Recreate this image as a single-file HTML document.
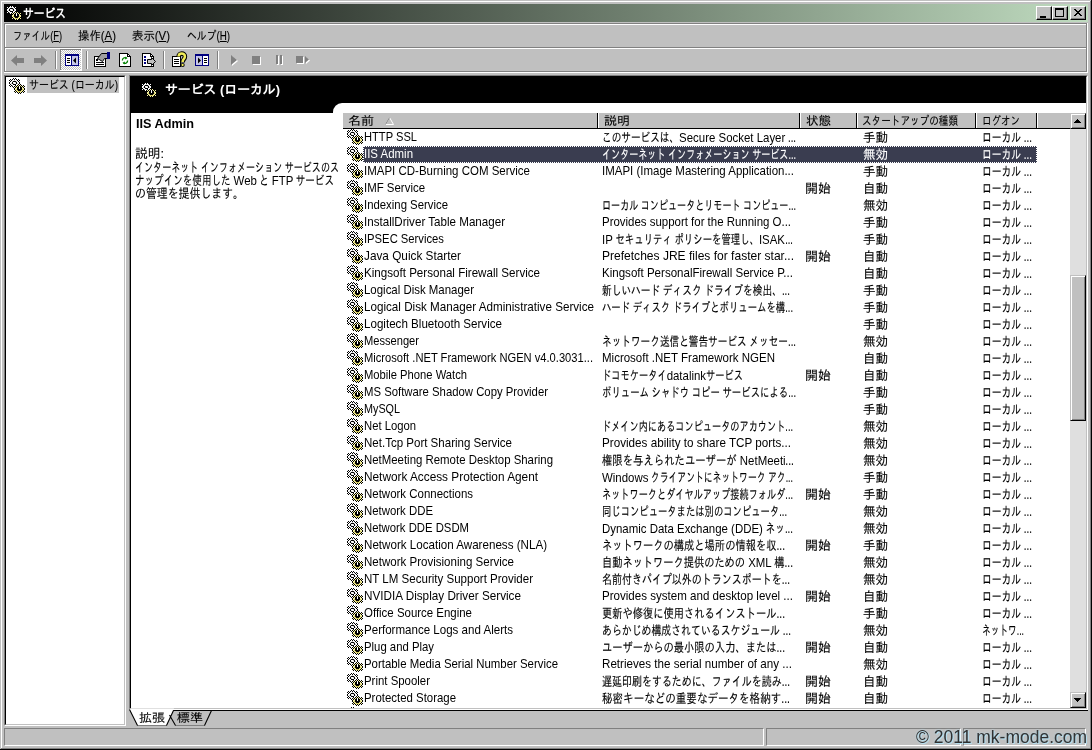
<!DOCTYPE html>
<html lang="ja">
<head>
<meta charset="utf-8">
<title>サービス</title>
<style>
html,body{margin:0;padding:0;}
body{width:1092px;height:750px;overflow:hidden;background:#c0c0c0;position:relative;
 font-family:"Liberation Sans","IPAGothic",sans-serif;font-size:12px;line-height:14px;color:#000;}
.abs,#win *{position:absolute;}
#win{position:absolute;left:0;top:0;width:1092px;height:750px;overflow:hidden;background:transparent;will-change:transform;}
#win *{box-sizing:border-box;white-space:nowrap;}
/* outer frame */
#fr-l{left:1px;top:1px;width:1px;height:748px;background:#fff;}
#fr-t{left:1px;top:1px;width:1090px;height:1px;background:#fff;}
#fr-r1{left:1090px;top:1px;width:1px;height:749px;background:#808080;}
#fr-r2{left:1091px;top:0;width:1px;height:750px;background:#000;}
#fr-b1{left:1px;top:748px;width:1090px;height:1px;background:#808080;}
#fr-b2{left:0;top:749px;width:1092px;height:1px;background:#000;}
/* title */
#title{left:4px;top:4px;width:1084px;height:18px;background:linear-gradient(to right,#000 0%,#c0dcc0 100%);}
#title .txt{left:19px;top:2px;color:#fff;font-weight:bold;font-size:13px;line-height:15px;}
.cbtn{top:2px;width:16px;height:14px;background:#c0c0c0;border:1px solid;border-color:#fff #000 #000 #fff;box-shadow:inset -1px -1px 0 #808080;}
/* menu */
#menu{left:4px;top:23px;width:1084px;height:24px;}
#menu span{top:6px;font-size:12px;line-height:14px;}
#menu u{position:static;}
.hl-d{background:#808080;height:1px;}
.hl-w{background:#fff;height:1px;}
/* toolbar */
#tb{left:4px;top:49px;width:1084px;height:23px;}
.sep{top:2px;width:2px;height:19px;border-left:1px solid #808080;border-right:1px solid #fff;}
/* panes */
#tree{left:4px;top:75px;width:122px;height:651px;background:#fff;border:1px solid;border-color:#808080 #fff #fff #808080;}
#tree .in{left:0;top:0;right:0;bottom:0;border:1px solid;border-color:#000 #c0c0c0 #c0c0c0 #000;}
#tree .selbg{left:22px;top:1px;width:92px;height:16px;background:#c0c0c0;}
#tree .txt{left:24px;top:2px;}
#right{left:129px;top:75px;width:959px;height:635px;background:#fff;border:1px solid;border-color:#808080 #fff #fff #808080;}
#right .in{left:0;top:0;right:0;bottom:0;border:1px solid;border-color:#000 #c0c0c0 #c0c0c0 #000;}
#band{left:131px;top:77px;width:955px;height:36px;background:#000;}
#bandcut{left:333px;top:103px;width:753px;height:12px;background:#fff;border-top-left-radius:9px;}
#band .txt,#bandtxt{color:#fff;font-weight:bold;font-size:13px;}
#hdr{left:343px;top:113px;width:727px;height:16px;background:#c0c0c0;border-bottom:1px solid #000;}
.hc{top:0;height:15px;border-right:1px solid #000;box-shadow:1px 0 0 #fff;}
.hc span{left:5px;top:1px;line-height:14px;}
.row{left:345px;width:692px;height:17px;}
.row .g{left:2px;top:0;}
.g{width:1px;height:1px;background:transparent;box-shadow:4px 0px #000,6px 0px #000,1px 1px #000,3px 1px #000,4px 1px #fff,5px 1px #000,6px 1px #fff,7px 1px #000,9px 1px #000,0px 2px #000,1px 2px #fff,2px 2px #000,3px 2px #fff,4px 2px #fff,5px 2px #c0c0c0,6px 2px #fff,7px 2px #fff,8px 2px #000,9px 2px #fff,10px 2px #000,1px 3px #000,2px 3px #fff,3px 3px #c0c0c0,4px 3px #000,5px 3px #000,6px 3px #000,7px 3px #c0c0c0,8px 3px #fff,9px 3px #000,0px 4px #000,1px 4px #fff,2px 4px #fff,3px 4px #000,4px 4px #fff,5px 4px #fff,6px 4px #c0c0c0,7px 4px #000,8px 4px #fff,9px 4px #fff,10px 4px #000,0px 5px #000,1px 5px #fff,2px 5px #c0c0c0,3px 5px #000,4px 5px #c0c0c0,5px 5px #fff,6px 5px #fff,7px 5px #000,8px 5px #c0c0c0,9px 5px #fff,10px 5px #000,1px 6px #000,2px 6px #fff,3px 6px #fff,4px 6px #000,5px 6px #000,6px 6px #000,7px 6px #fff,8px 6px #fff,9px 6px #000,11px 6px #000,0px 7px #000,1px 7px #fff,2px 7px #000,3px 7px #c0c0c0,4px 7px #fff,5px 7px #fff,6px 7px #000,7px 7px #fff,8px 7px #000,9px 7px #f4f0a0,10px 7px #000,11px 7px #f4f0a0,12px 7px #000,14px 7px #000,1px 8px #000,3px 8px #000,4px 8px #fff,5px 8px #000,6px 8px #f4f0a0,7px 8px #000,8px 8px #f4f0a0,9px 8px #000,10px 8px #fff,11px 8px #000,12px 8px #f4f0a0,13px 8px #000,14px 8px #f4f0a0,15px 8px #000,4px 9px #000,6px 9px #000,7px 9px #f4f0a0,8px 9px #000,9px 9px #000,10px 9px #fff,11px 9px #000,12px 9px #000,13px 9px #f4f0a0,14px 9px #000,5px 10px #000,6px 10px #f4f0a0,7px 10px #f4f0a0,8px 10px #000,9px 10px #000,10px 10px #fff,11px 10px #000,12px 10px #000,13px 10px #f4f0a0,14px 10px #f4f0a0,15px 10px #000,5px 11px #000,6px 11px #f4f0a0,7px 11px #d0c860,8px 11px #000,9px 11px #000,10px 11px #000,11px 11px #000,12px 11px #000,13px 11px #d0c860,14px 11px #f4f0a0,15px 11px #000,6px 12px #000,7px 12px #f4f0a0,8px 12px #d0c860,9px 12px #000,10px 12px #000,11px 12px #000,12px 12px #d0c860,13px 12px #f4f0a0,14px 12px #000,5px 13px #000,6px 13px #f4f0a0,7px 13px #000,8px 13px #f4f0a0,9px 13px #d0c860,10px 13px #d0c860,11px 13px #d0c860,12px 13px #f4f0a0,13px 13px #000,14px 13px #f4f0a0,15px 13px #000,6px 14px #000,8px 14px #000,9px 14px #f4f0a0,10px 14px #000,11px 14px #f4f0a0,12px 14px #000,14px 14px #000,9px 15px #000,11px 15px #000;}
.c{top:0;height:17px;overflow:hidden;}
.c .t{left:0;top:1px;line-height:15px;font-size:13px;}
.c .t.lat{font-size:13px;top:0px;line-height:15px;-webkit-text-stroke:0;}
#win{-webkit-text-stroke:.12px currentColor;}
#win em{position:static;display:inline-block;font-style:normal;-webkit-text-stroke:0;transform-origin:0 0;}
#wm,#bandtxt,#title .txt,.nostroke{-webkit-text-stroke:0;}
[style*="scaleX"]{transform-origin:0 0;}
.c1{left:19px;width:235px;}
.c2{left:257px;width:197px;}
.c3{left:460px;width:52px;}
.c4{left:518px;width:110px;}
.c5{left:637px;width:54px;}
.sel .selbg{left:18px;top:0;width:674px;height:17px;background:#3a3d50;outline:1px dotted #fff;outline-offset:-1px;}
.sel .c{color:#fff;}
/* scrollbar */
#sb{left:1070px;top:113px;width:16px;height:595px;background:#dfdfdf;}
.btn3d{background:#c0c0c0;border:1px solid;border-color:#c0c0c0 #000 #000 #c0c0c0;box-shadow:inset 1px 1px 0 #fff,inset -1px -1px 0 #808080;}
/* tabs */
/* status */
.sp{top:728px;height:18px;border:1px solid;border-color:#808080 #fff #fff #808080;}
#wm{left:916px;top:727px;font-family:"Liberation Sans",sans-serif;font-size:17.5px;line-height:20px;color:#303030;text-shadow:1px 1px 0 #b5dff0,0 0 2px #b5dff0;}
</style>
</head>
<body>
<div id="win">
 <div id="fr-l"></div><div id="fr-t"></div><div id="fr-r1"></div><div id="fr-r2"></div><div id="fr-b1"></div><div id="fr-b2"></div>

 <div id="title">
  <i class="g" style="left:2px;top:1px"></i>
  <span class="txt" style="transform:scaleX(0.8269)">サービス</span>
  <div class="cbtn" style="left:1032px"><i style="left:3px;top:9px;width:6px;height:2px;background:#000"></i></div>
  <div class="cbtn" style="left:1048px"><i style="left:2px;top:1px;width:9px;height:9px;border:1px solid #000;border-top-width:2px"></i></div>
  <div class="cbtn" style="left:1066px"><svg style="left:3px;top:2px" width="8" height="7" viewBox="0 0 8 7"><path d="M0 0L7 7M1 0L8 7M7 0L0 7M8 0L1 7" stroke="#000" stroke-width="1" fill="none" shape-rendering="crispEdges"/></svg></div>
 </div>

 <div id="menu">
  <span style="transform:scaleX(0.7736);left:9px">ファイル(<u>F</u>)</span>
  <span style="transform:scaleX(0.9496);left:74px">操作(<u>A</u>)</span>
  <span style="transform:scaleX(0.9496);left:128px">表示(<u>V</u>)</span>
  <span style="transform:scaleX(0.8164);left:183px">ヘルプ(<u>H</u>)</span>
 </div>
 <div class="hl-d" style="left:4px;top:23px;width:1083px"></div>
 <div class="hl-w" style="left:5px;top:24px;width:1081px"></div>
 <div class="hl-d" style="left:4px;top:47px;width:1083px"></div>
 <div class="hl-w" style="left:5px;top:48px;width:1081px"></div>
 <div style="left:4px;top:23px;width:1px;height:49px;background:#808080"></div>
 <div style="left:5px;top:24px;width:1px;height:23px;background:#fff"></div>
 <div style="left:5px;top:48px;width:1px;height:23px;background:#fff"></div>
 <div style="left:1086px;top:24px;width:1px;height:48px;background:#808080"></div>
 <div style="left:1087px;top:23px;width:1px;height:50px;background:#fff"></div>

<svg style="left:0;top:48px" width="340" height="25" viewBox="0 48 340 25" shape-rendering="crispEdges">
 <defs>
  <pattern id="dith" width="2" height="2" patternUnits="userSpaceOnUse"><rect width="2" height="2" fill="#fff"/><rect width="1" height="1" fill="#c0c0c0"/><rect x="1" y="1" width="1" height="1" fill="#c0c0c0"/></pattern>
 </defs>
 <!-- back / forward (disabled) -->
 <path d="M11 60.5L17 55V58H24V63H17V66Z" fill="#808080" shape-rendering="auto"/>
 <path d="M47 60.5L41 55V58H34V63H41V66Z" fill="#808080" shape-rendering="auto"/>
 <!-- separators -->
 <g>
  <rect x="55" y="51" width="1" height="18" fill="#808080"/><rect x="56" y="51" width="1" height="18" fill="#fff"/>
  <rect x="86" y="51" width="1" height="18" fill="#808080"/><rect x="87" y="51" width="1" height="18" fill="#fff"/>
  <rect x="163" y="51" width="1" height="18" fill="#808080"/><rect x="164" y="51" width="1" height="18" fill="#fff"/>
  <rect x="217" y="51" width="1" height="18" fill="#808080"/><rect x="218" y="51" width="1" height="18" fill="#fff"/>
 </g>
 <!-- pressed button -->
 <rect x="60" y="49" width="22" height="22" fill="#fff"/>
 <rect x="60" y="49" width="21" height="21" fill="#808080"/>
 <rect x="61" y="50" width="20" height="20" fill="url(#dith)"/>
 <!-- show/hide tree icon -->
 <rect x="65" y="54" width="14" height="12" fill="#000080"/>
 <rect x="66" y="56" width="5" height="9" fill="#fff"/>
 <rect x="72" y="56" width="6" height="9" fill="#c6c6e8"/>
 <rect x="67" y="58" width="3" height="1" fill="#000"/><rect x="67" y="60" width="3" height="1" fill="#000"/><rect x="67" y="62" width="3" height="1" fill="#000"/>
 <path d="M73 60.5L76 57.5V63.5Z" fill="#000" shape-rendering="auto"/>
 <!-- properties -->
 <rect x="94.5" y="56.5" width="11" height="10" fill="#fff" stroke="#000"/>
 <rect x="96" y="59" width="2" height="2" fill="#000"/>
 <rect x="96" y="62" width="8" height="1" fill="#000"/><rect x="96" y="64" width="8" height="1" fill="#000"/>
 <path d="M97.5 58.5L101.5 53.5H107.5V58.5H104.5L102.5 61.5Z" fill="#a0a0a0" stroke="#000" shape-rendering="auto"/>
 <rect x="107" y="52" width="3" height="7" fill="#000080"/>
 <!-- refresh -->
 <path d="M119.5 53.5H127.5L130.5 56.5V66.5H119.5Z" fill="#fff" stroke="#000"/>
 <path d="M127.5 53.5V56.5H130.5" fill="none" stroke="#000"/>
 <g shape-rendering="auto" fill="none" stroke="#008000" stroke-width="1.3">
  <path d="M122.4 60.5A2.7 2.7 0 0 1 126.5 58"/><path d="M127.6 60.5A2.7 2.7 0 0 1 123.5 63"/>
  <path d="M125.5 56.5L127.5 58.3L125 59.5Z" fill="#008000" stroke="none"/><path d="M124.5 64.5L122.5 62.7L125 61.5Z" fill="#008000" stroke="none"/>
 </g>
 <!-- export list -->
 <path d="M142.5 53.5H150.5L153.5 56.5V66.5H142.5Z" fill="#fff" stroke="#000"/>
 <path d="M150.5 53.5V56.5H153.5" fill="none" stroke="#000"/>
 <rect x="144" y="56" width="2" height="2" fill="#000080"/><rect x="144" y="59" width="2" height="2" fill="#000080"/><rect x="144" y="62" width="2" height="2" fill="#000080"/>
 <path d="M147.5 59.5H151.5V57.5L155.5 61.5L151.5 65.5V63.5H147.5Z" fill="#c0c0c0" stroke="#000" shape-rendering="auto"/>
 <!-- help -->
 <rect x="172.5" y="56.5" width="8" height="10" fill="#fff" stroke="#000"/>
 <rect x="174" y="59" width="5" height="1" fill="#000"/><rect x="174" y="61" width="5" height="1" fill="#000"/><rect x="174" y="63" width="5" height="1" fill="#000"/>
 <g shape-rendering="auto">
  <path d="M178.6 57C178.6 52.6 184.9 52.6 184.9 56.4C184.9 59 182.6 59.2 182.6 62.4" fill="none" stroke="#000" stroke-width="4.6" stroke-linecap="butt"/>
  <path d="M178.6 56.6C178.6 52.6 184.9 52.6 184.9 56.4C184.9 59 182.6 59.2 182.6 62" fill="none" stroke="#f0ec58" stroke-width="2.5"/>
  <circle cx="182.6" cy="65" r="2.1" fill="#000"/><circle cx="182.6" cy="65" r="1.15" fill="#f0ec58"/>
 </g>
 <!-- action pane icon -->
 <rect x="195" y="54" width="14" height="12" fill="#000080"/>
 <rect x="196" y="56" width="6" height="9" fill="#c6c6e8"/>
 <rect x="203" y="56" width="5" height="9" fill="#fff"/>
 <rect x="204" y="58" width="3" height="1" fill="#000"/><rect x="204" y="60" width="3" height="1" fill="#000"/><rect x="204" y="62" width="3" height="1" fill="#000"/>
 <path d="M201 60.5L198 57.5V63.5Z" fill="#000" shape-rendering="auto"/>
 <!-- disabled play/stop/pause/restart -->
 <g shape-rendering="auto">
  <path d="M232 56L238 61L232 66Z" fill="#fff"/><path d="M231 55L237 60L231 65Z" fill="#808080"/>
 </g>
 <rect x="253" y="57" width="8" height="8" fill="#fff"/><rect x="252" y="56" width="8" height="8" fill="#808080"/>
 <rect x="277" y="56" width="2" height="9" fill="#fff"/><rect x="281" y="56" width="2" height="9" fill="#fff"/>
 <rect x="276" y="55" width="2" height="9" fill="#808080"/><rect x="280" y="55" width="2" height="9" fill="#808080"/>
 <rect x="297" y="57" width="7" height="7" fill="#fff"/><rect x="296" y="56" width="7" height="7" fill="#808080"/>
 <g shape-rendering="auto"><path d="M306 57L310 60.5L306 64Z" fill="#fff"/><path d="M305 56L309 59.5L305 63Z" fill="#808080"/></g>
</svg>

 <div class="hl-d" style="left:4px;top:71px;width:1083px"></div>
 <div class="hl-w" style="left:4px;top:72px;width:1084px"></div>

 <div id="tree"><div class="in"></div>
  <i class="g" style="left:4px;top:2px"></i>
  <div class="selbg"></div>
  <span class="txt" style="transform:scaleX(0.8292)">サービス (ローカル)</span>
 </div>

 <div id="right"><div class="in"></div></div>
 <div id="band"></div>
 <div id="bandcut"></div>
 <i class="g" style="left:141px;top:82px"></i>
 <span id="bandtxt" style="transform:scaleX(0.9890);left:165px;top:83px">サービス (ローカル)</span>

 <span class="nostroke" style="transform:scaleX(0.9753);left:136px;top:117px;font-weight:bold;font-size:13px">IIS Admin</span>
 <span style="transform:scaleX(0.9789);left:135px;top:147px;font-size:13px">説明:</span>
 <span style="transform:scaleX(0.6957);left:135px;top:161px;font-size:13px">インターネット インフォメーション サービスのス</span>
 <span style="transform:scaleX(0.7354);left:135px;top:174px;font-size:13px">ナップインを使用した <em style="width:31.71px;transform:scaleX(1.1965)">Web</em> と <em style="width:29.39px;transform:scaleX(1.1965)">FTP</em> サービス</span>
 <span style="transform:scaleX(0.8385);left:135px;top:187px;font-size:13px">の管理を提供します。</span>

 <div id="hdr">
  <div class="hc" style="left:0;width:255px"><span style="transform:scaleX(1.0833)">名前</span><svg style="left:42px;top:4px" width="9" height="8" viewBox="0 0 9 8"><path d="M4.5 .5L8.5 7.5H.5Z" fill="none" stroke="#fff"/><path d="M4.5 .5L.5 7.5" fill="none" stroke="#808080"/></svg></div>
  <div class="hc" style="left:256px;width:201px"><span style="transform:scaleX(1.0833)">説明</span></div>
  <div class="hc" style="left:458px;width:56px"><span style="transform:scaleX(1.0417)">状態</span></div>
  <div class="hc" style="left:515px;width:118px"><span style="transform:scaleX(0.8000);left:4px">スタートアップの種類</span></div>
  <div class="hc" style="left:634px;width:60px"><span style="transform:scaleX(0.7917)">ログオン</span></div>
 </div>
<div class="row" style="top:129px"><i class="g"></i><span class="c c1"><span class="t lat" style="transform:scaleX(0.8563)">HTTP SSL</span></span><span class="c c2"><span class="t" style="transform:scaleX(0.7412)">このサービスは、<em style="width:143.29px;transform:scaleX(1.1873)">Secure Socket Layer</em> ...</span></span><span class="c c4"><span class="t" style="transform:scaleX(0.9615)">手動</span></span><span class="c c5"><span class="t" style="transform:scaleX(0.7524)">ローカル ...</span></span></div>
<div class="row sel" style="top:146px"><i class="g"></i><div class="selbg"></div><span class="c c1"><span class="t lat" style="transform:scaleX(0.8807)">IIS Admin</span></span><span class="c c2"><span class="t" style="transform:scaleX(0.6977)">インターネット インフォメーション サービス...</span></span><span class="c c4"><span class="t" style="transform:scaleX(0.9615)">無効</span></span><span class="c c5"><span class="t" style="transform:scaleX(0.7524)">ローカル ...</span></span></div>
<div class="row" style="top:163px"><i class="g"></i><span class="c c1"><span class="t lat" style="transform:scaleX(0.8838)">IMAPI CD-Burning COM Service</span></span><span class="c c2"><span class="t lat" style="transform:scaleX(0.8828)">IMAPI (Image Mastering Application...</span></span><span class="c c4"><span class="t" style="transform:scaleX(0.9615)">手動</span></span><span class="c c5"><span class="t" style="transform:scaleX(0.7524)">ローカル ...</span></span></div>
<div class="row" style="top:180px"><i class="g"></i><span class="c c1"><span class="t lat" style="transform:scaleX(0.8797)">IMF Service</span></span><span class="c c3"><span class="t" style="transform:scaleX(1.0000)">開始</span></span><span class="c c4"><span class="t" style="transform:scaleX(0.9615)">自動</span></span><span class="c c5"><span class="t" style="transform:scaleX(0.7524)">ローカル ...</span></span></div>
<div class="row" style="top:197px"><i class="g"></i><span class="c c1"><span class="t lat" style="transform:scaleX(0.8739)">Indexing Service</span></span><span class="c c2"><span class="t" style="transform:scaleX(0.6977)">ローカル コンピュータとリモート コンピュー...</span></span><span class="c c4"><span class="t" style="transform:scaleX(0.9615)">無効</span></span><span class="c c5"><span class="t" style="transform:scaleX(0.7524)">ローカル ...</span></span></div>
<div class="row" style="top:214px"><i class="g"></i><span class="c c1"><span class="t lat" style="transform:scaleX(0.8924)">InstallDriver Table Manager</span></span><span class="c c2"><span class="t lat" style="transform:scaleX(0.8806)">Provides support for the Running O...</span></span><span class="c c4"><span class="t" style="transform:scaleX(0.9615)">手動</span></span><span class="c c5"><span class="t" style="transform:scaleX(0.7524)">ローカル ...</span></span></div>
<div class="row" style="top:231px"><i class="g"></i><span class="c c1"><span class="t lat" style="transform:scaleX(0.8650)">IPSEC Services</span></span><span class="c c2"><span class="t" style="transform:scaleX(0.7232)"><em style="width:14.96px;transform:scaleX(1.2167)">IP</em> セキュリティ ポリシーを管理し、<em style="width:36.05px;transform:scaleX(1.2167)">ISAK</em>...</span></span><span class="c c4"><span class="t" style="transform:scaleX(0.9615)">手動</span></span><span class="c c5"><span class="t" style="transform:scaleX(0.7524)">ローカル ...</span></span></div>
<div class="row" style="top:248px"><i class="g"></i><span class="c c1"><span class="t lat" style="transform:scaleX(0.9071)">Java Quick Starter</span></span><span class="c c2"><span class="t lat" style="transform:scaleX(0.9259)">Prefetches JRE files for faster star...</span></span><span class="c c3"><span class="t" style="transform:scaleX(1.0000)">開始</span></span><span class="c c4"><span class="t" style="transform:scaleX(0.9615)">自動</span></span><span class="c c5"><span class="t" style="transform:scaleX(0.7524)">ローカル ...</span></span></div>
<div class="row" style="top:265px"><i class="g"></i><span class="c c1"><span class="t lat" style="transform:scaleX(0.8923)">Kingsoft Personal Firewall Service</span></span><span class="c c2"><span class="t lat" style="transform:scaleX(0.8880)">Kingsoft PersonalFirewall Service P...</span></span><span class="c c4"><span class="t" style="transform:scaleX(0.9615)">自動</span></span><span class="c c5"><span class="t" style="transform:scaleX(0.7524)">ローカル ...</span></span></div>
<div class="row" style="top:282px"><i class="g"></i><span class="c c1"><span class="t lat" style="transform:scaleX(0.8799)">Logical Disk Manager</span></span><span class="c c2"><span class="t" style="transform:scaleX(0.7458)">新しいハード ディスク ドライブを検出、...</span></span><span class="c c4"><span class="t" style="transform:scaleX(0.9615)">手動</span></span><span class="c c5"><span class="t" style="transform:scaleX(0.7524)">ローカル ...</span></span></div>
<div class="row" style="top:299px"><i class="g"></i><span class="c c1"><span class="t lat" style="transform:scaleX(0.8967)">Logical Disk Manager Administrative Service</span></span><span class="c c2"><span class="t" style="transform:scaleX(0.7206)">ハード ディスク ドライブとボリュームを構...</span></span><span class="c c4"><span class="t" style="transform:scaleX(0.9615)">手動</span></span><span class="c c5"><span class="t" style="transform:scaleX(0.7524)">ローカル ...</span></span></div>
<div class="row" style="top:316px"><i class="g"></i><span class="c c1"><span class="t lat" style="transform:scaleX(0.8923)">Logitech Bluetooth Service</span></span><span class="c c4"><span class="t" style="transform:scaleX(0.9615)">手動</span></span><span class="c c5"><span class="t" style="transform:scaleX(0.7524)">ローカル ...</span></span></div>
<div class="row" style="top:333px"><i class="g"></i><span class="c c1"><span class="t lat" style="transform:scaleX(0.8552)">Messenger</span></span><span class="c c2"><span class="t" style="transform:scaleX(0.7420)">ネットワーク送信と警告サービス メッセー...</span></span><span class="c c4"><span class="t" style="transform:scaleX(0.9615)">無効</span></span><span class="c c5"><span class="t" style="transform:scaleX(0.7524)">ローカル ...</span></span></div>
<div class="row" style="top:350px"><i class="g"></i><span class="c c1"><span class="t lat" style="transform:scaleX(0.8575)">Microsoft .NET Framework NGEN v4.0.3031...</span></span><span class="c c2"><span class="t lat" style="transform:scaleX(0.8848)">Microsoft .NET Framework NGEN</span></span><span class="c c4"><span class="t" style="transform:scaleX(0.9615)">自動</span></span><span class="c c5"><span class="t" style="transform:scaleX(0.7524)">ローカル ...</span></span></div>
<div class="row" style="top:367px"><i class="g"></i><span class="c c1"><span class="t lat" style="transform:scaleX(0.8620)">Mobile Phone Watch</span></span><span class="c c2"><span class="t" style="transform:scaleX(0.7102)">ドコモケータイ<em style="width:55.52px;transform:scaleX(1.2390)">datalink</em>サービス</span></span><span class="c c3"><span class="t" style="transform:scaleX(1.0000)">開始</span></span><span class="c c4"><span class="t" style="transform:scaleX(0.9615)">自動</span></span><span class="c c5"><span class="t" style="transform:scaleX(0.7524)">ローカル ...</span></span></div>
<div class="row" style="top:384px"><i class="g"></i><span class="c c1"><span class="t lat" style="transform:scaleX(0.8721)">MS Software Shadow Copy Provider</span></span><span class="c c2"><span class="t" style="transform:scaleX(0.7221)">ボリューム シャドウ コピー サービスによる...</span></span><span class="c c4"><span class="t" style="transform:scaleX(0.9615)">手動</span></span><span class="c c5"><span class="t" style="transform:scaleX(0.7524)">ローカル ...</span></span></div>
<div class="row" style="top:401px"><i class="g"></i><span class="c c1"><span class="t lat" style="transform:scaleX(0.8306)">MySQL</span></span><span class="c c4"><span class="t" style="transform:scaleX(0.9615)">手動</span></span><span class="c c5"><span class="t" style="transform:scaleX(0.7524)">ローカル ...</span></span></div>
<div class="row" style="top:418px"><i class="g"></i><span class="c c1"><span class="t lat" style="transform:scaleX(0.8667)">Net Logon</span></span><span class="c c2"><span class="t" style="transform:scaleX(0.7052)">ドメイン内にあるコンピュータのアカウント...</span></span><span class="c c4"><span class="t" style="transform:scaleX(0.9615)">無効</span></span><span class="c c5"><span class="t" style="transform:scaleX(0.7524)">ローカル ...</span></span></div>
<div class="row" style="top:435px"><i class="g"></i><span class="c c1"><span class="t lat" style="transform:scaleX(0.8867)">Net.Tcp Port Sharing Service</span></span><span class="c c2"><span class="t lat" style="transform:scaleX(0.8978)">Provides ability to share TCP ports...</span></span><span class="c c4"><span class="t" style="transform:scaleX(0.9615)">無効</span></span><span class="c c5"><span class="t" style="transform:scaleX(0.7524)">ローカル ...</span></span></div>
<div class="row" style="top:452px"><i class="g"></i><span class="c c1"><span class="t lat" style="transform:scaleX(0.8777)">NetMeeting Remote Desktop Sharing</span></span><span class="c c2"><span class="t" style="transform:scaleX(0.7969)">権限を与えられたユーザーが <em style="width:57.45px;transform:scaleX(1.1042)">NetMeeti</em>...</span></span><span class="c c4"><span class="t" style="transform:scaleX(0.9615)">無効</span></span><span class="c c5"><span class="t" style="transform:scaleX(0.7524)">ローカル ...</span></span></div>
<div class="row" style="top:469px"><i class="g"></i><span class="c c1"><span class="t lat" style="transform:scaleX(0.9087)">Network Access Protection Agent</span></span><span class="c c2"><span class="t" style="transform:scaleX(0.6786)"><em style="width:68.41px;transform:scaleX(1.2968)">Windows</em> クライアントにネットワーク アク...</span></span><span class="c c4"><span class="t" style="transform:scaleX(0.9615)">手動</span></span><span class="c c5"><span class="t" style="transform:scaleX(0.7524)">ローカル ...</span></span></div>
<div class="row" style="top:486px"><i class="g"></i><span class="c c1"><span class="t lat" style="transform:scaleX(0.8821)">Network Connections</span></span><span class="c c2"><span class="t" style="transform:scaleX(0.7052)">ネットワークとダイヤルアップ接続フォルダ...</span></span><span class="c c3"><span class="t" style="transform:scaleX(1.0000)">開始</span></span><span class="c c4"><span class="t" style="transform:scaleX(0.9615)">手動</span></span><span class="c c5"><span class="t" style="transform:scaleX(0.7524)">ローカル ...</span></span></div>
<div class="row" style="top:503px"><i class="g"></i><span class="c c1"><span class="t lat" style="transform:scaleX(0.8762)">Network DDE</span></span><span class="c c2"><span class="t" style="transform:scaleX(0.7175)">同じコンピュータまたは別のコンピュータ...</span></span><span class="c c4"><span class="t" style="transform:scaleX(0.9615)">無効</span></span><span class="c c5"><span class="t" style="transform:scaleX(0.7524)">ローカル ...</span></span></div>
<div class="row" style="top:520px"><i class="g"></i><span class="c c1"><span class="t lat" style="transform:scaleX(0.8705)">Network DDE DSDM</span></span><span class="c c2"><span class="t" style="transform:scaleX(0.7450)"><em style="width:215.91px;transform:scaleX(1.1812)">Dynamic Data Exchange (DDE)</em> ネッ...</span></span><span class="c c4"><span class="t" style="transform:scaleX(0.9615)">無効</span></span><span class="c c5"><span class="t" style="transform:scaleX(0.7524)">ローカル ...</span></span></div>
<div class="row" style="top:537px"><i class="g"></i><span class="c c1"><span class="t lat" style="transform:scaleX(0.8928)">Network Location Awareness (NLA)</span></span><span class="c c2"><span class="t" style="transform:scaleX(0.7893)">ネットワークの構成と場所の情報を収...</span></span><span class="c c3"><span class="t" style="transform:scaleX(1.0000)">開始</span></span><span class="c c4"><span class="t" style="transform:scaleX(0.9615)">手動</span></span><span class="c c5"><span class="t" style="transform:scaleX(0.7524)">ローカル ...</span></span></div>
<div class="row" style="top:554px"><i class="g"></i><span class="c c1"><span class="t lat" style="transform:scaleX(0.8872)">Network Provisioning Service</span></span><span class="c c2"><span class="t" style="transform:scaleX(0.7860)">自動ネットワーク提供のための <em style="width:29.93px;transform:scaleX(1.1196)">XML</em> 構...</span></span><span class="c c4"><span class="t" style="transform:scaleX(0.9615)">無効</span></span><span class="c c5"><span class="t" style="transform:scaleX(0.7524)">ローカル ...</span></span></div>
<div class="row" style="top:571px"><i class="g"></i><span class="c c1"><span class="t lat" style="transform:scaleX(0.8871)">NT LM Security Support Provider</span></span><span class="c c2"><span class="t" style="transform:scaleX(0.7678)">名前付きパイプ以外のトランスポートを...</span></span><span class="c c4"><span class="t" style="transform:scaleX(0.9615)">無効</span></span><span class="c c5"><span class="t" style="transform:scaleX(0.7524)">ローカル ...</span></span></div>
<div class="row" style="top:588px"><i class="g"></i><span class="c c1"><span class="t lat" style="transform:scaleX(0.9017)">NVIDIA Display Driver Service</span></span><span class="c c2"><span class="t lat" style="transform:scaleX(0.8900)">Provides system and desktop level ...</span></span><span class="c c3"><span class="t" style="transform:scaleX(1.0000)">開始</span></span><span class="c c4"><span class="t" style="transform:scaleX(0.9615)">自動</span></span><span class="c c5"><span class="t" style="transform:scaleX(0.7524)">ローカル ...</span></span></div>
<div class="row" style="top:605px"><i class="g"></i><span class="c c1"><span class="t lat" style="transform:scaleX(0.8807)">Office Source Engine</span></span><span class="c c2"><span class="t" style="transform:scaleX(0.7893)">更新や修復に使用されるインストール...</span></span><span class="c c4"><span class="t" style="transform:scaleX(0.9615)">手動</span></span><span class="c c5"><span class="t" style="transform:scaleX(0.7524)">ローカル ...</span></span></div>
<div class="row" style="top:622px"><i class="g"></i><span class="c c1"><span class="t lat" style="transform:scaleX(0.8887)">Performance Logs and Alerts</span></span><span class="c c2"><span class="t" style="transform:scaleX(0.7607)">あらかじめ構成されているスケジュール ...</span></span><span class="c c4"><span class="t" style="transform:scaleX(0.9615)">無効</span></span><span class="c c5"><span class="t" style="transform:scaleX(0.6683)">ネットワ...</span></span></div>
<div class="row" style="top:639px"><i class="g"></i><span class="c c1"><span class="t lat" style="transform:scaleX(0.8724)">Plug and Play</span></span><span class="c c2"><span class="t" style="transform:scaleX(0.7893)">ユーザーからの最小限の入力、または...</span></span><span class="c c3"><span class="t" style="transform:scaleX(1.0000)">開始</span></span><span class="c c4"><span class="t" style="transform:scaleX(0.9615)">自動</span></span><span class="c c5"><span class="t" style="transform:scaleX(0.7524)">ローカル ...</span></span></div>
<div class="row" style="top:656px"><i class="g"></i><span class="c c1"><span class="t lat" style="transform:scaleX(0.8774)">Portable Media Serial Number Service</span></span><span class="c c2"><span class="t lat" style="transform:scaleX(0.8944)">Retrieves the serial number of any ...</span></span><span class="c c4"><span class="t" style="transform:scaleX(0.9615)">無効</span></span><span class="c c5"><span class="t" style="transform:scaleX(0.7524)">ローカル ...</span></span></div>
<div class="row" style="top:673px"><i class="g"></i><span class="c c1"><span class="t lat" style="transform:scaleX(0.8782)">Print Spooler</span></span><span class="c c2"><span class="t" style="transform:scaleX(0.7678)">遅延印刷をするために、ファイルを読み...</span></span><span class="c c3"><span class="t" style="transform:scaleX(1.0000)">開始</span></span><span class="c c4"><span class="t" style="transform:scaleX(0.9615)">自動</span></span><span class="c c5"><span class="t" style="transform:scaleX(0.7524)">ローカル ...</span></span></div>
<div class="row" style="top:690px"><i class="g"></i><span class="c c1"><span class="t lat" style="transform:scaleX(0.8779)">Protected Storage</span></span><span class="c c2"><span class="t" style="transform:scaleX(0.8109)">秘密キーなどの重要なデータを格納す...</span></span><span class="c c3"><span class="t" style="transform:scaleX(1.0000)">開始</span></span><span class="c c4"><span class="t" style="transform:scaleX(0.9615)">自動</span></span><span class="c c5"><span class="t" style="transform:scaleX(0.7524)">ローカル ...</span></span></div>
 <div style="left:351px;top:707px;width:1px;height:1px;background:#000;box-shadow:2px 0 #000"></div>
 <div id="sb">
  <div class="btn3d" style="left:0;top:0;width:16px;height:16px"><svg style="left:3px;top:5px" width="7" height="4" viewBox="0 0 7 4" shape-rendering="crispEdges"><path d="M3 0h1v1h1v1h1v1h1v1h-7v-1h1v-1h1v-1h1z" fill="#000"/></svg></div>
  <div class="btn3d" style="left:0;top:162px;width:16px;height:146px"></div>
  <div class="btn3d" style="left:0;top:579px;width:16px;height:16px"><svg style="left:3px;top:5px" width="7" height="4" viewBox="0 0 7 4" shape-rendering="crispEdges"><path d="M0 0h7v1h-1v1h-1v1h-1v1h-1v-1h-1v-1h-1v-1h-1z" fill="#000"/></svg></div>
 </div>

 <!--TABS-->
 <div style="left:173px;top:710px;width:915px;height:1px;background:#000"></div>
 <svg style="left:126px;top:708px" width="100" height="20" viewBox="126 708 100 20">
  <path d="M129.5 708.5L137.5 725.5H166.5L174 708.5Z" fill="#fff"/>
  <path d="M137 725.5H167M175 725.5H205" fill="none" stroke="#808080"/>
  <path d="M129.5 709.5L137.5 725.5M166.5 725.5L173.5 710.5M169.5 715L175.5 725.5M204.5 725.5L211.5 710.5" fill="none" stroke="#000" stroke-width="1.1"/>
 </svg>
 <span style="transform:scaleX(1.0833);left:139px;top:711px">拡張</span>
 <span style="transform:scaleX(1.0833);left:177px;top:711px">標準</span>

 <div class="sp" style="left:4px;width:760px"></div>
 <div class="sp" style="left:766px;width:195px"></div>
 <div class="sp" style="left:963px;width:123px"></div>
 <span id="wm" style="transform:scaleX(0.9994)">© 2011 mk-mode.com</span>
</div>
</body>
</html>
